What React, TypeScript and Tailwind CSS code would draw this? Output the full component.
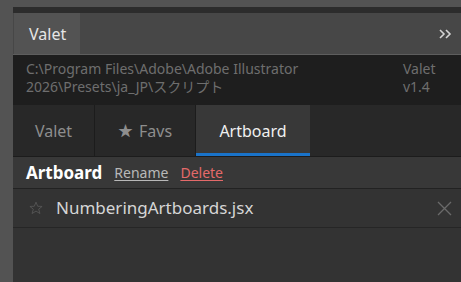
import React from "react";

const font = { fontFamily: '"Noto Sans", "Noto Sans CJK JP", sans-serif' };

export default function App() {
  return (
    <div className="w-[461px] h-[282px] bg-[#535353] pl-[13px] pt-[7px] overflow-hidden" style={font}>
      <div className="h-[275px] bg-[#2c2c2c] pt-[6px] flex flex-col">
        <div className="h-[42px] bg-[#474747] flex border-b border-[#5e5e5e] pl-px">
          <div className="w-[66px] bg-[#535353] text-[#e6e6e6] text-[16px] flex items-center pl-[15px]">Valet</div>
          <div className="flex-1" />
          <div className="w-[22px] flex items-center">
            <svg width="13" height="10" viewBox="0 0 13 10">
              <path d="M1 1 L5 5 L1 9 M7 1 L11 5 L7 9" fill="none" stroke="#d4d4d4" strokeWidth="1.6" />
            </svg>
          </div>
        </div>
        <div className="h-[50px] bg-[#1e1e1e] flex px-[13px] pt-[5px] text-[14px] leading-[18px] text-[#6e6e6e]">
          <div className="flex-1">
            <div>C:\Program Files\Adobe\Adobe Illustrator</div>
            <div>2026\Presets\ja_JP\スクリプト</div>
          </div>
          <div className="w-[45px]">
            <div>Valet</div>
            <div>v1.4</div>
          </div>
        </div>
        <div className="h-[52px] bg-[#282828] flex border-b border-[#1c1c1c]">
          <div className="w-[82px] border-r border-[#1c1c1c] flex items-center justify-center text-[16px] text-[#8e8e8e]">Valet</div>
          <div className="w-[101px] border-r border-[#1c1c1c] flex items-center justify-center text-[16px] text-[#8e8e8e] gap-[6px]">
            <span className="text-[15px]">★</span>Favs
          </div>
          <div className="w-[114px] bg-[#383838] border-b-[3px] border-[#1a73c9] flex items-center justify-center text-[16px] text-[#f0f0f0] pt-[3px]">Artboard</div>
        </div>
        <div className="h-[32px] bg-[#383838] flex items-center pl-[13px] border-b border-[#222] gap-[12px]">
          <span className="text-[17px] font-bold text-white">Artboard</span>
          <span className="text-[14px] text-[#b8b8b8] underline underline-offset-2">Rename</span>
          <span className="text-[14px] text-[#e46a6a] underline underline-offset-2">Delete</span>
        </div>
        <div className="h-[39px] bg-[#333333] flex items-center border-b border-[#262626] pl-[16px] pr-[9px]">
          <svg width="14" height="14" viewBox="0 0 24 24" className="mr-[13px]">
            <polygon points="12,2 14.9,9 22.5,9.3 16.6,14 18.7,21.5 12,17.3 5.3,21.5 7.4,14 1.5,9.3 9.1,9" fill="none" stroke="#5a5a5a" strokeWidth="1.4" strokeLinejoin="round" />
          </svg>
          <span className="text-[17px] text-[#d6d6d6] flex-1">NumberingArtboards.jsx</span>
          <svg width="15" height="15" viewBox="0 0 15 15">
            <path d="M1 1 L14 14 M14 1 L1 14" stroke="#6a6a6a" strokeWidth="1.3" />
          </svg>
        </div>
        <div className="flex-1 bg-[#333333]" />
      </div>
    </div>
  );
}
